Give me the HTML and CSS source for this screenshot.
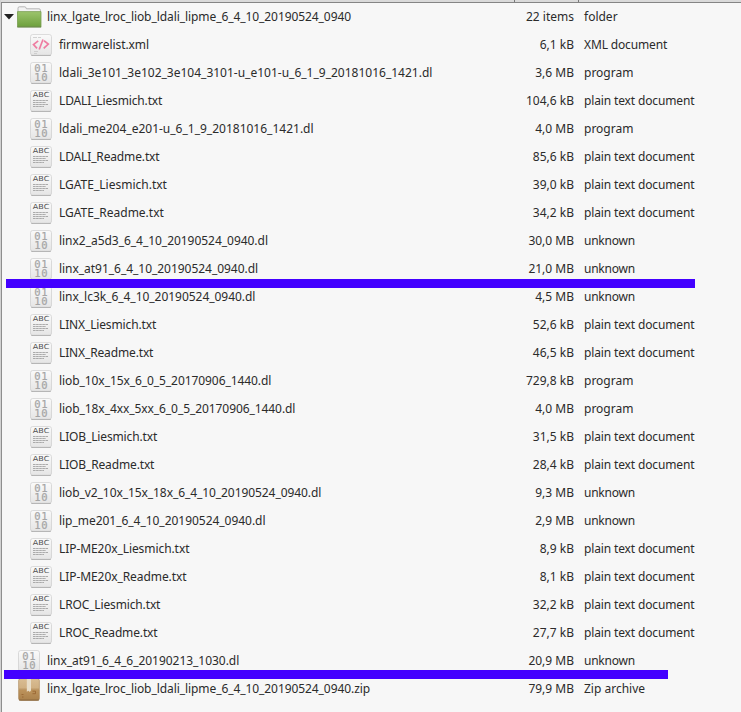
FILE: index.html
```
<!DOCTYPE html>
<html lang="en">
<head>
<meta charset="utf-8">
<title>Files</title>
<link rel="stylesheet" href="styles.css">
</head>
<body>
<svg class="defs" aria-hidden="true">
  <defs>
    <linearGradient id="paper" x1="0" y1="0" x2="0" y2="1"><stop offset="0" stop-color="#fafafa"/><stop offset="1" stop-color="#e5e5e5"/></linearGradient>
    <linearGradient id="green" x1="0" y1="0" x2="0" y2="1"><stop offset="0" stop-color="#9cc46c"/><stop offset="1" stop-color="#6da03c"/></linearGradient>
    <linearGradient id="box" x1="0" y1="0" x2="0" y2="1"><stop offset="0" stop-color="#d9bd94"/><stop offset=".5" stop-color="#cfae80"/><stop offset=".51" stop-color="#bd935b"/><stop offset="1" stop-color="#aa814c"/></linearGradient>
    <symbol id="sheet" viewBox="0 0 22 23">
      <rect x=".8" y="1.3" width="20.4" height="20.8" rx="2.3" fill="#777"/>
      <rect x=".5" y=".5" width="21" height="20.7" rx="2.3" fill="url(#paper)" stroke="#d4d4d4" stroke-width=".8"/>
    </symbol>
    <symbol id="bin" viewBox="0 0 22 23">
      <use href="#sheet"/>
      <g class="digits"><text x="4.2" y="9.8" textLength="13.4">01</text><text x="4.2" y="18.7" textLength="13.4">10</text></g>
    </symbol>
    <symbol id="txt" viewBox="0 0 22 23">
      <use href="#sheet"/>
      <text class="abc" x="2.8" y="7.2" textLength="16.5" lengthAdjust="spacingAndGlyphs">ABC</text>
      <path d="M3 10.5h15.5M3 12.5h13M3 14.5h15M3 16.5h11" stroke="#999" stroke-width=".8" stroke-dasharray="2.6 .5"/>
    </symbol>
    <symbol id="xml" viewBox="0 0 22 23">
      <use href="#sheet"/>
      <path d="M3 3.5h4M8 3.5h3M4 17.5h4M4 19.5h3" stroke="#c8c8c8" stroke-width=".8"/>
      <path d="M8.2 6.8L3.5 10.5L7 14.4M14 6.8L18.3 10L13.7 14.4M13 5.5L9.2 15.5" fill="none" stroke="#ee7da1" stroke-width="1.7"/>
    </symbol>
    <symbol id="folder" viewBox="0 0 25 22">
      <path d="M1 8V2.2Q1 .8 2.4.8H7.8Q9 .8 9.4 2.8H22Q23.4 2.8 23.4 4.2V8Z" fill="#f2f2f2" stroke="#a6a6a6" stroke-width=".8"/>
      <path d="M.5 5.6H24V20.8H.5Z" fill="url(#green)" stroke="#789e50" stroke-width=".8"/>
      <path d="M.3 21H24.2" stroke="#54752f" stroke-width=".8"/>
    </symbol>
    <symbol id="zip" viewBox="0 0 22 23">
      <rect x=".6" y=".6" width="20.8" height="21.8" rx="2" fill="url(#box)" stroke="#a88458" stroke-width=".6"/>
      <path d="M8.8 0H13V12.5L11.8 14L10.5 12.8L8.8 13.8Z" fill="#e8ddc9"/>
      <path d="M1 11.2H8.8M13 11.2H21" stroke="#a17743" stroke-width=".6"/>
      <path d="M14.5 13.2h3v2.5h-3M3.5 16.5h2M4 19h1.5" fill="none" stroke="#95622f" stroke-width=".8"/>
      <path d="M1 22.1H21" stroke="#7a5a34" stroke-width=".7"/>
    </symbol>
  </defs>
</svg>
<main class="files">
  <div class="head"><i></i><i></i><i></i></div>
  <div class="row top"><svg class="arrow" viewBox="0 0 10 6"><path d="M0 0H10L5 5.5Z"/></svg><svg class="folder"><use href="#folder"/></svg><span class="name snug">linx_lgate_lroc_liob_ldali_lipme_6_4_10_20190524_0940</span><span class="size">22 items</span><span>folder</span></div>
  <div class="row"><svg class="icon"><use href="#xml"/></svg><span class="name snug">firmwarelist.xml</span><span class="size">6,1 kB</span><span class="tight">XML document</span></div>
  <div class="row"><svg class="icon"><use href="#bin"/></svg><span class="name">ldali_3e101_3e102_3e104_3101-u_e101-u_6_1_9_20181016_1421.dl</span><span class="size">3,6 MB</span><span>program</span></div>
  <div class="row"><svg class="icon"><use href="#txt"/></svg><span class="name tight">LDALI_Liesmich.txt</span><span class="size">104,6 kB</span><span class="tight">plain text document</span></div>
  <div class="row"><svg class="icon"><use href="#bin"/></svg><span class="name">ldali_me204_e201-u_6_1_9_20181016_1421.dl</span><span class="size">4,0 MB</span><span>program</span></div>
  <div class="row"><svg class="icon"><use href="#txt"/></svg><span class="name tight">LDALI_Readme.txt</span><span class="size">85,6 kB</span><span class="tight">plain text document</span></div>
  <div class="row"><svg class="icon"><use href="#txt"/></svg><span class="name">LGATE_Liesmich.txt</span><span class="size">39,0 kB</span><span class="tight">plain text document</span></div>
  <div class="row"><svg class="icon"><use href="#txt"/></svg><span class="name">LGATE_Readme.txt</span><span class="size">34,2 kB</span><span class="tight">plain text document</span></div>
  <div class="row"><svg class="icon"><use href="#bin"/></svg><span class="name slight">linx2_a5d3_6_4_10_20190524_0940.dl</span><span class="size">30,0 MB</span><span class="loose">unknown</span></div>
  <div class="row"><svg class="icon"><use href="#bin"/></svg><span class="name slight">linx_at91_6_4_10_20190524_0940.dl</span><span class="size">21,0 MB</span><span class="loose">unknown</span></div>
  <div class="row"><svg class="icon"><use href="#bin"/></svg><span class="name slight">linx_lc3k_6_4_10_20190524_0940.dl</span><span class="size">4,5 MB</span><span class="loose">unknown</span></div>
  <div class="row"><svg class="icon"><use href="#txt"/></svg><span class="name tight">LINX_Liesmich.txt</span><span class="size">52,6 kB</span><span class="tight">plain text document</span></div>
  <div class="row"><svg class="icon"><use href="#txt"/></svg><span class="name tight">LINX_Readme.txt</span><span class="size">46,5 kB</span><span class="tight">plain text document</span></div>
  <div class="row"><svg class="icon"><use href="#bin"/></svg><span class="name snug">liob_10x_15x_6_0_5_20170906_1440.dl</span><span class="size">729,8 kB</span><span>program</span></div>
  <div class="row"><svg class="icon"><use href="#bin"/></svg><span class="name snug">liob_18x_4xx_5xx_6_0_5_20170906_1440.dl</span><span class="size">4,0 MB</span><span>program</span></div>
  <div class="row"><svg class="icon"><use href="#txt"/></svg><span class="name tight">LIOB_Liesmich.txt</span><span class="size">31,5 kB</span><span class="tight">plain text document</span></div>
  <div class="row"><svg class="icon"><use href="#txt"/></svg><span class="name tight">LIOB_Readme.txt</span><span class="size">28,4 kB</span><span class="tight">plain text document</span></div>
  <div class="row"><svg class="icon"><use href="#bin"/></svg><span class="name snug">liob_v2_10x_15x_18x_6_4_10_20190524_0940.dl</span><span class="size">9,3 MB</span><span class="loose">unknown</span></div>
  <div class="row"><svg class="icon"><use href="#bin"/></svg><span class="name slight">lip_me201_6_4_10_20190524_0940.dl</span><span class="size">2,9 MB</span><span class="loose">unknown</span></div>
  <div class="row"><svg class="icon"><use href="#txt"/></svg><span class="name snug">LIP-ME20x_Liesmich.txt</span><span class="size">8,9 kB</span><span class="tight">plain text document</span></div>
  <div class="row"><svg class="icon"><use href="#txt"/></svg><span class="name snug">LIP-ME20x_Readme.txt</span><span class="size">8,1 kB</span><span class="tight">plain text document</span></div>
  <div class="row"><svg class="icon"><use href="#txt"/></svg><span class="name tight">LROC_Liesmich.txt</span><span class="size">32,2 kB</span><span class="tight">plain text document</span></div>
  <div class="row"><svg class="icon"><use href="#txt"/></svg><span class="name tight">LROC_Readme.txt</span><span class="size">27,7 kB</span><span class="tight">plain text document</span></div>
  <div class="row outer"><svg class="icon"><use href="#bin"/></svg><span class="name slight">linx_at91_6_4_6_20190213_1030.dl</span><span class="size">20,9 MB</span><span class="loose">unknown</span></div>
  <div class="row outer"><svg class="icon"><use href="#zip"/></svg><span class="name snug">linx_lgate_lroc_liob_ldali_lipme_6_4_10_20190524_0940.zip</span><span class="size">79,9 MB</span><span>Zip archive</span></div>
  <div class="mark first"></div>
  <div class="mark second"></div>
</main>
</body>
</html>
```
FILE: styles.css
```
body {
  margin: 0;
  background: #f7f7f7;
  color: #2b2b2b;
  font: 12px/28px "Noto Sans", sans-serif;
}
.defs { position: absolute; width: 0; height: 0; }
.files {
  position: relative;
  box-sizing: border-box;
  height: 712px;
  border-left: 1px solid #d2d2d2;
  box-shadow: inset 1px 0 #8e8e8e;
  overflow: hidden;
}
.head {
  box-sizing: border-box;
  display: grid;
  grid-template-columns: 513px 64px 1fr;
  height: 3px;
  background: #dadada;
  border-bottom: 1px solid #858585;
}
.head i + i { border-left: 1px solid #777; }
.row {
  display: flex;
  align-items: center;
  height: 28px;
  padding-left: 29px;
  white-space: nowrap;
}
.row.top { padding-left: 3px; }
.row.outer { padding-left: 17px; }
.icon { flex: none; width: 22px; height: 23px; margin: 1px 7px 0 0; }
.arrow { flex: none; width: 10px; height: 6px; margin-right: 3px; fill: #222; }
.folder { flex: none; width: 25px; height: 22px; margin-right: 5px; }
.name { flex: 1; }
.size { width: 80px; text-align: right; }
.size + span { width: 157px; margin-left: 10px; }
.slight { letter-spacing: -.035px; }
.snug { letter-spacing: -.075px; }
.tight { letter-spacing: -.14px; }
.loose { letter-spacing: -.24px; }
.digits { fill: #a5a5a5; stroke: #a5a5a5; stroke-width: .2; font: 10.5px "DejaVu Sans Mono", monospace; }
.abc { fill: #505050; font: 7px "DejaVu Sans", sans-serif; }
.mark { position: absolute; height: 9px; background: #4300ff; }
.first { left: 5px; top: 279px; width: 689px; }
.second { left: 3px; top: 670px; width: 664px; }
```
